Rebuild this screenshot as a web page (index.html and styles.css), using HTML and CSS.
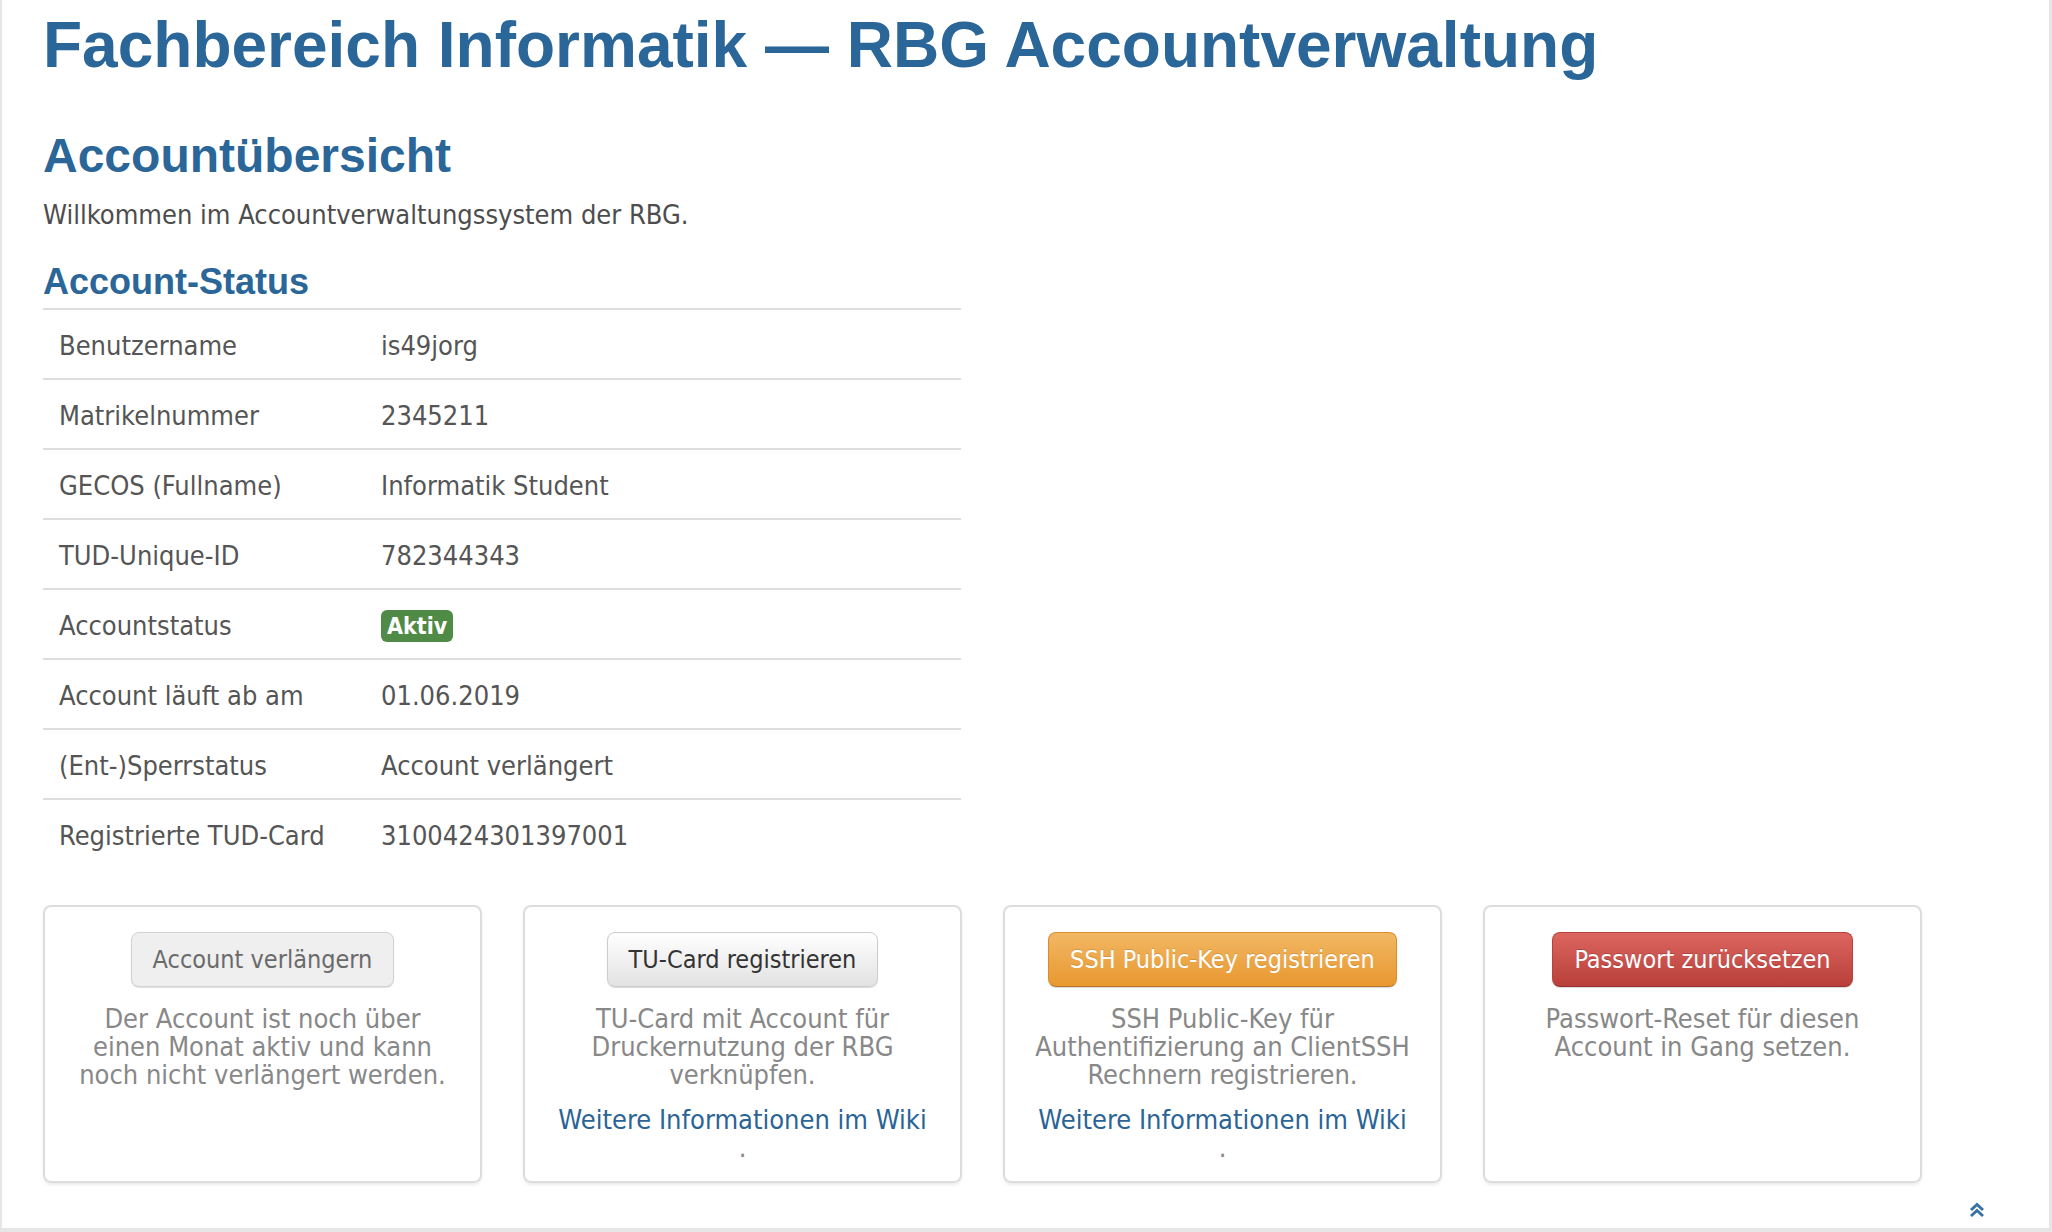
FILE: index.html
```html
<!DOCTYPE html>
<html lang="de">
<head>
<meta charset="utf-8">
<title>RBG Accountverwaltung</title>
<link rel="stylesheet" href="styles.css">
</head>
<body>
<div class="page">
  <div class="content">
    <h1 class="title">Fachbereich Informatik — RBG Accountverwaltung</h1>
    <h2 class="subtitle">Accountübersicht</h2>
    <p class="welcome">Willkommen im Accountverwaltungssystem der RBG.</p>
    <h3 class="section">Account-Status</h3>
    <table class="status">
      <tr><td class="label">Benutzername</td><td>is49jorg</td></tr>
      <tr><td class="label">Matrikelnummer</td><td>2345211</td></tr>
      <tr><td class="label">GECOS (Fullname)</td><td>Informatik Student</td></tr>
      <tr><td class="label">TUD-Unique-ID</td><td>782344343</td></tr>
      <tr><td class="label">Accountstatus</td><td><span class="badge">Aktiv</span></td></tr>
      <tr><td class="label">Account läuft ab am</td><td>01.06.2019</td></tr>
      <tr><td class="label">(Ent-)Sperrstatus</td><td>Account verlängert</td></tr>
      <tr><td class="label">Registrierte TUD-Card</td><td>3100424301397001</td></tr>
    </table>
    <div class="cards">
      <div class="card">
        <span class="btn btn-disabled">Account verlängern</span>
        <p class="desc">Der Account ist noch über<br>einen Monat aktiv und kann<br>noch nicht verlängert werden.</p>
      </div>
      <div class="card">
        <span class="btn btn-default">TU-Card registrieren</span>
        <p class="desc">TU-Card mit Account für<br>Druckernutzung der RBG<br>verknüpfen.</p>
        <p class="more"><a href="#" class="wiki">Weitere Informationen im Wiki</a><br>.</p>
      </div>
      <div class="card">
        <span class="btn btn-warning">SSH Public-Key registrieren</span>
        <p class="desc">SSH Public-Key für<br>Authentifizierung an ClientSSH<br>Rechnern registrieren.</p>
        <p class="more"><a href="#" class="wiki">Weitere Informationen im Wiki</a><br>.</p>
      </div>
      <div class="card">
        <span class="btn btn-danger">Passwort zurücksetzen</span>
        <p class="desc">Passwort-Reset für diesen<br>Account in Gang setzen.</p>
      </div>
    </div>
  </div>
  <a href="#" class="totop" aria-label="Nach oben">
    <svg width="18" height="16" viewBox="0 0 18 16"><path d="M3 8 L9 2.5 L15 8" fill="none" stroke="#3a72a8" stroke-width="3" stroke-linejoin="miter"/><path d="M3 14 L9 8.5 L15 14" fill="none" stroke="#3a72a8" stroke-width="3" stroke-linejoin="miter"/></svg>
  </a>
</div>
</body>
</html>
```
FILE: styles.css
```css
html, body {
  margin: 0;
  padding: 0;
}
body {
  background: #e6e6e6;
  font-family: "DejaVu Sans Condensed", "DejaVu Sans", sans-serif;
  font-stretch: condensed;
  color: #505050;
}
.page {
  position: relative;
  background: #fff;
  margin-left: 2px;
  width: 2047px;
  height: 1228px;
  overflow: hidden;
}
.content {
  padding: 10px 0 0 41px;
}
.title {
  margin: 0;
  font-family: "Liberation Sans", Arial, sans-serif;
  font-stretch: normal;
  font-weight: bold;
  font-size: 64px;
  line-height: 70px;
  color: #2b6699;
}
.subtitle {
  margin: 50px 0 0;
  font-family: "Liberation Sans", Arial, sans-serif;
  font-stretch: normal;
  font-weight: bold;
  font-size: 48px;
  line-height: 52px;
  color: #2b6699;
}
.welcome {
  margin: 13px 0 0;
  font-size: 27px;
  line-height: 40px;
  color: #4d4d4d;
}
.section {
  margin: 27px 0 0;
  font-family: "Liberation Sans", Arial, sans-serif;
  font-stretch: normal;
  font-weight: bold;
  font-size: 36px;
  line-height: 40px;
  color: #2b6699;
}
.status {
  margin-top: 6px;
  width: 918px;
  border-collapse: collapse;
  table-layout: fixed;
  font-size: 27px;
  line-height: 40px;
  color: #555;
}
.status tr {
  border-top: 2px solid #dddddd;
}
.status td {
  padding: 16px 16px 12px 0;
  vertical-align: top;
  white-space: nowrap;
}
.status td.label {
  width: 306px;
  padding-left: 16px;
}
.badge {
  display: inline-block;
  vertical-align: top;
  margin-top: 4px;
  height: 32px;
  line-height: 32px;
  padding: 0 6px;
  border-radius: 6px;
  background: #4f8a47;
  color: #fff;
  font-weight: bold;
  font-size: 23px;
}
.cards {
  margin-top: 37px;
  display: grid;
  grid-template-columns: repeat(4, 439px);
  column-gap: 41px;
}
.card {
  box-sizing: border-box;
  height: 278px;
  border: 2px solid #dddddd;
  border-radius: 8px;
  box-shadow: 0 2px 3px rgba(0, 0, 0, 0.08);
  padding: 25px 8px 0;
  text-align: center;
}
.btn {
  display: inline-block;
  font-size: 25px;
  line-height: 27px;
  padding: 13px 21px;
  border: 1px solid #cccccc;
  border-radius: 8px;
  white-space: nowrap;
}
.btn-disabled {
  background: #efefef;
  color: #6a6a6a;
  border-color: #d2d2d2;
  box-shadow: 0 1px 1px rgba(0, 0, 0, 0.12);
}
.btn-default {
  background: linear-gradient(#ffffff, #e2e2e2);
  color: #333;
  border-color: #cccccc;
  box-shadow: 0 1px 1px rgba(0, 0, 0, 0.15);
}
.btn-warning {
  background: linear-gradient(#f2b764, #e8982f);
  color: #fff;
  border-color: #d88d2c #d88d2c #b8742a;
  text-shadow: 0 -1px 0 rgba(0, 0, 0, 0.15);
  box-shadow: 0 1px 1px rgba(0, 0, 0, 0.15);
}
.btn-danger {
  background: linear-gradient(#dd6560, #b83f3a);
  color: #fff;
  border-color: #b9413c #b9413c #9a2f2b;
  text-shadow: 0 -1px 0 rgba(0, 0, 0, 0.2);
  box-shadow: 0 1px 1px rgba(0, 0, 0, 0.15);
}
.desc {
  margin: 18px 0 0;
  font-size: 27px;
  line-height: 28px;
  color: #888888;
}
.more {
  margin: 17px 0 0;
  font-size: 27px;
  line-height: 28px;
  color: #888888;
}
.wiki {
  color: #2a6496;
  text-decoration: none;
}
.totop {
  position: absolute;
  left: 1966px;
  top: 1202px;
  display: block;
  width: 18px;
  height: 16px;
}
.totop svg {
  display: block;
}
```
